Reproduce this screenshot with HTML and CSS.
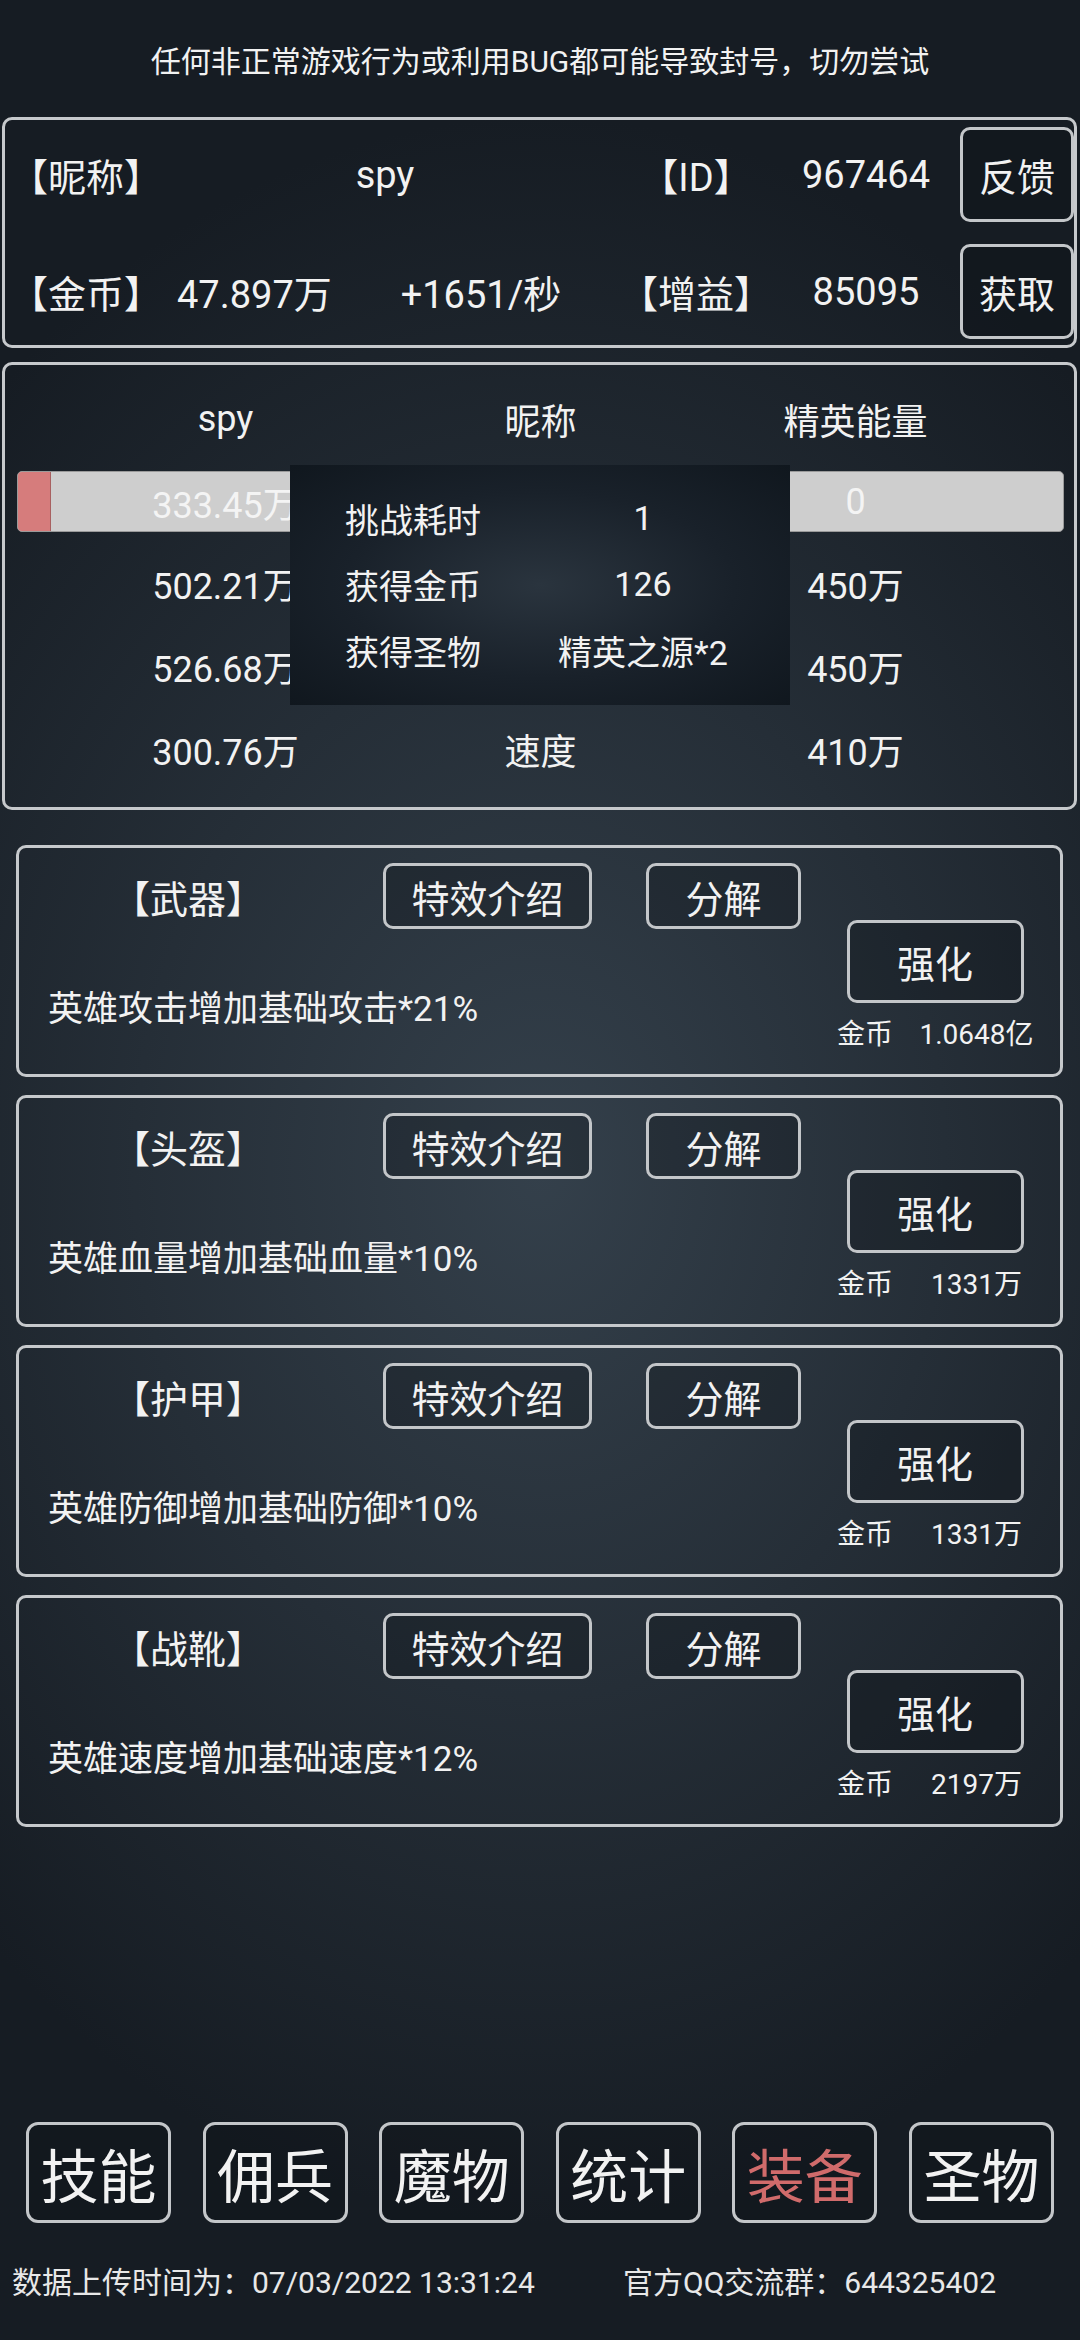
FILE: index.html
```html
<!DOCTYPE html>
<html>
<head>
<meta name="viewport" content="width=device-width, initial-scale=1">
<link rel="stylesheet" href="styles.css">
</head>
<body>

<div class="screen">

  <div class="notice">任何非正常游戏行为或利用BUG都可能导致封号，切勿尝试</div>

  <!-- player info -->
  <div class="panel info">
    <span class="lbl">【昵称】</span>
    <span class="nick">spy</span>
    <span class="tag">【ID】</span>
    <span class="val">967464</span>
    <span class="btn side-btn">反馈</span>

    <span class="lbl">【金币】</span>
    <span class="gold">47.897万</span>
    <span class="rate">+1651/秒</span>
    <span class="tag">【增益】</span>
    <span class="val">85095</span>
    <span class="btn side-btn">获取</span>
  </div>

  <!-- battle stats -->
  <div class="panel stats">
    <div class="cols head">
      <span>spy</span><span>昵称</span><span>精英能量</span>
    </div>
    <div class="bar">
      <div class="bar-fill" style="width:33px"></div>
      <div class="cols bar-text">
        <span>333.45万</span><span></span><span>0</span>
      </div>
    </div>
    <div class="cols row first">
      <span>502.21万</span><span></span><span>450万</span>
    </div>
    <div class="cols row">
      <span>526.68万</span><span></span><span>450万</span>
    </div>
    <div class="cols row">
      <span>300.76万</span><span>速度</span><span>410万</span>
    </div>

    <div class="result">
      <span>挑战耗时</span><span class="res-val">1</span>
      <span>获得金币</span><span class="res-val">126</span>
      <span>获得圣物</span><span class="res-val">精英之源*2</span>
    </div>
  </div>

  <!-- equipment -->
  <div class="card first">
    <span class="name">【武器】</span>
    <span class="btn fx">特效介绍</span>
    <span class="btn split">分解</span>
    <div class="up">
      <span class="btn up-btn">强化</span>
      <div class="cost"><span>金币</span><span class="cost-val">1.0648亿</span></div>
    </div>
    <span class="desc">英雄攻击增加基础攻击*21%</span>
  </div>

  <div class="card">
    <span class="name">【头盔】</span>
    <span class="btn fx">特效介绍</span>
    <span class="btn split">分解</span>
    <div class="up">
      <span class="btn up-btn">强化</span>
      <div class="cost"><span>金币</span><span class="cost-val">1331万</span></div>
    </div>
    <span class="desc">英雄血量增加基础血量*10%</span>
  </div>

  <div class="card">
    <span class="name">【护甲】</span>
    <span class="btn fx">特效介绍</span>
    <span class="btn split">分解</span>
    <div class="up">
      <span class="btn up-btn">强化</span>
      <div class="cost"><span>金币</span><span class="cost-val">1331万</span></div>
    </div>
    <span class="desc">英雄防御增加基础防御*10%</span>
  </div>

  <div class="card">
    <span class="name">【战靴】</span>
    <span class="btn fx">特效介绍</span>
    <span class="btn split">分解</span>
    <div class="up">
      <span class="btn up-btn">强化</span>
      <div class="cost"><span>金币</span><span class="cost-val">2197万</span></div>
    </div>
    <span class="desc">英雄速度增加基础速度*12%</span>
  </div>

  <!-- bottom menu -->
  <div class="nav">
    <span class="btn nav-btn">技能</span>
    <span class="btn nav-btn">佣兵</span>
    <span class="btn nav-btn">魔物</span>
    <span class="btn nav-btn">统计</span>
    <span class="btn nav-btn active">装备</span>
    <span class="btn nav-btn">圣物</span>
  </div>

  <div class="footer">
    <span>数据上传时间为：07/03/2022 13:31:24</span>
    <span>官方QQ交流群：644325402</span>
  </div>

</div>

</body>
</html>
```

FILE: styles.css
```css
* {
  box-sizing: border-box;
}

body {
  margin: 0;
  background-color: #141a20;
  background-image: radial-gradient(ellipse 75% 45% at 50% 50%, #34404b 0%, #252e37 50%, #161c23 100%);
  color: #f2f2f2;
  font-family: Roboto, "Noto Sans CJK SC", sans-serif;
}

.screen {
  width: 1080px;
  height: 2340px;
  display: flex;
  flex-direction: column;
}

/* top warning line */
.notice {
  height: 117px;
  display: flex;
  align-items: center;
  justify-content: center;
  font-size: 30px;
}

/* framed boxes */
.panel {
  margin: 0 3px 0 2px;
  border: 3px solid #c6c9cc;
  border-radius: 10px;
}

/* generic outlined button */
.btn {
  display: flex;
  align-items: center;
  justify-content: center;
  border: 3px solid #c3c6c9;
  border-radius: 10px;
  background: rgba(8, 12, 16, 0.25);
}

/* player info */
.info {
  padding: 7px 5px 6px 5px;
  display: grid;
  grid-template-columns: 150px 192px 258px 172px 168px 124px;
  grid-template-rows: 95px 95px;
  row-gap: 22px;
  align-items: center;
  font-size: 38px;
}

.nick {
  grid-column: span 2;
  text-align: center;
}

.gold {
  padding-left: 17px;
}

.rate,
.tag,
.val {
  text-align: center;
}

.side-btn {
  justify-self: end;
  width: 114px;
  height: 95px;
}

/* battle stats */
.stats {
  position: relative;
  margin-top: 14px;
  padding: 12px 10px 17px 12px;
  font-size: 36px;
}

.cols {
  display: grid;
  grid-template-columns: repeat(3, 315px);
  justify-content: center;
  align-items: center;
  text-align: center;
}

.head {
  height: 84px;
}

.bar {
  position: relative;
  margin-top: 10px;
  height: 61px;
  background: #cecece;
  border: 1px solid #9a9a9a;
  border-radius: 5px;
  overflow: hidden;
}

.bar-fill {
  position: absolute;
  left: 0;
  top: 0;
  bottom: 0;
  background: #d67c7c;
  border-right: 1px solid #a86060;
}

.bar-text {
  position: relative;
  height: 59px;
  color: #f4f4f4;
}

.row {
  height: 83px;
}

.row.first {
  margin-top: 9px;
}

/* challenge result popup */
.result {
  position: absolute;
  left: 285px;
  top: 100px;
  width: 500px;
  height: 240px;
  padding: 20px 0 0 55px;
  display: grid;
  grid-template-columns: 170px 256px;
  grid-auto-rows: 66px;
  align-items: center;
  font-size: 34px;
  background: radial-gradient(ellipse at 50% 50%, #2a343e 0%, #19212a 55%, #10171e 100%);
}

.res-val {
  text-align: center;
}

/* equipment cards */
.card {
  height: 232px;
  margin: 18px 17px 0 16px;
  padding: 15px 0 14px 0;
  border: 3px solid #c6c9cc;
  border-radius: 10px;
  display: grid;
  grid-template-columns: 364px 209px 54px 155px 9px 1fr;
  grid-template-rows: 66px 1fr;
  grid-template-areas:
    "name fx . split . up"
    "desc desc desc desc . up";
}

.card.first {
  margin-top: 35px;
}

.name {
  grid-area: name;
  align-self: center;
  text-align: center;
  padding-right: 26px;
  font-size: 38px;
}

.fx {
  grid-area: fx;
  font-size: 38px;
}

.split {
  grid-area: split;
  font-size: 38px;
}

.desc {
  grid-area: desc;
  margin-top: 61px;
  padding-left: 29px;
  line-height: 40px;
  font-size: 35px;
  align-self: start;
}

.up {
  grid-area: up;
  display: flex;
  flex-direction: column;
  align-items: center;
  padding-top: 57px;
}

.up-btn {
  width: 177px;
  height: 83px;
  font-size: 38px;
}

.cost {
  align-self: stretch;
  margin-top: 17px;
  height: 30px;
  line-height: 30px;
  display: grid;
  grid-template-columns: 83px 1fr;
  font-size: 28px;
}

.cost span:first-child {
  text-align: right;
}

.cost-val {
  text-align: center;
}

/* bottom menu */
.nav {
  margin-top: auto;
  display: flex;
  justify-content: space-between;
  padding: 0 26px;
}

.nav-btn {
  width: 145px;
  height: 101px;
  font-size: 58px;
  border-radius: 12px;
}

.nav-btn.active {
  color: #d06b6b;
}

.footer {
  margin: 40px 0 37px 0;
  padding-left: 12px;
  height: 40px;
  line-height: 40px;
  display: grid;
  grid-template-columns: 611px auto;
  font-size: 30px;
  color: #e8e8e8;
}
```
